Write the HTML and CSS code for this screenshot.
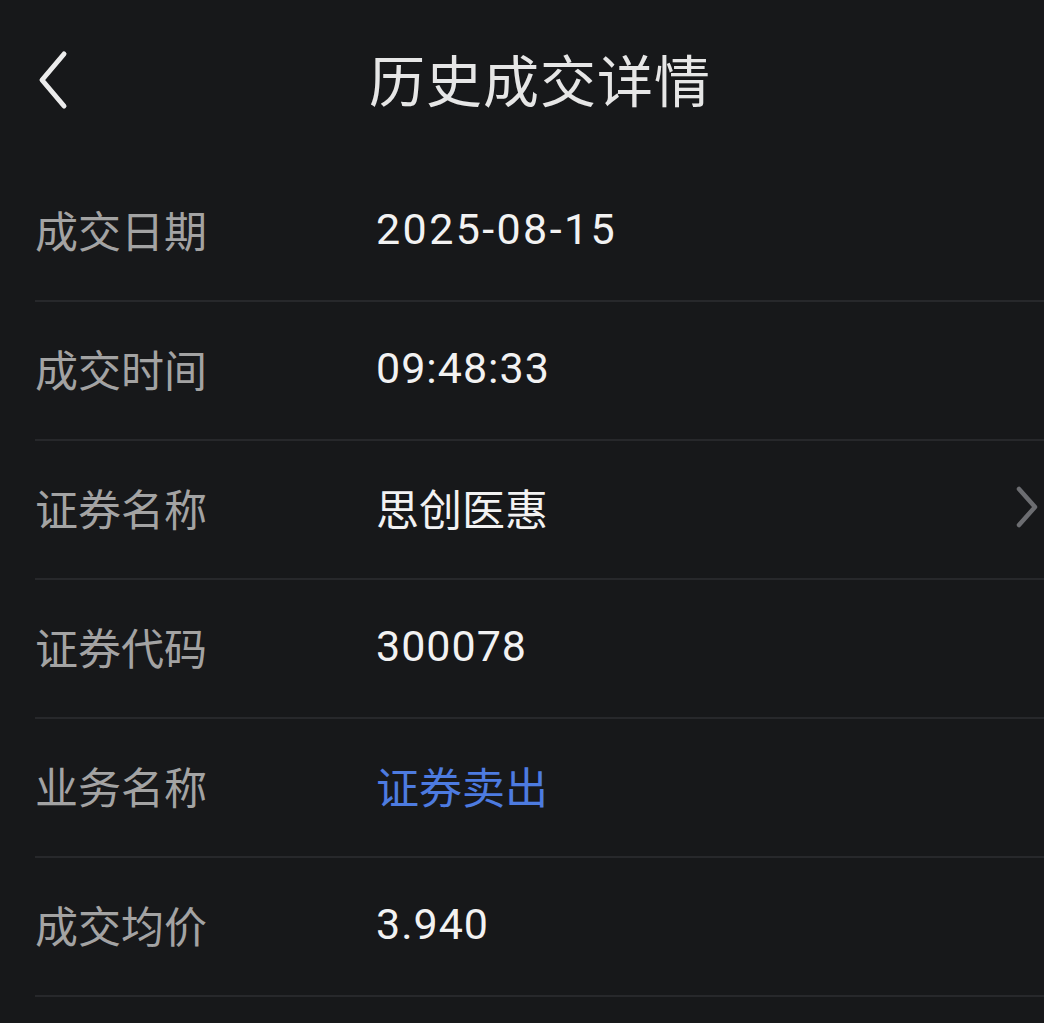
FILE: index.html
```html
<!DOCTYPE html>
<html lang="zh-CN">
<head>
<meta charset="UTF-8">
<meta name="viewport" content="width=device-width, initial-scale=1.0">
<title>历史成交详情</title>
<link rel="stylesheet" href="styles.css">
</head>
<body>
<div class="page">
    <div class="header">
        <a class="back" href="#">
            <svg width="40" height="60" viewBox="0 0 40 60"><path d="M32 4 L10 30 L32 56" fill="none" stroke="#ececec" stroke-width="5" stroke-linecap="round" stroke-linejoin="round"/></svg>
        </a>
        <h1>历史成交详情</h1>
    </div>

    <div class="list">
        <div class="row">
            <span class="label">成交日期</span>
            <span class="value num date">2025-08-15</span>
        </div>
        <div class="row">
            <span class="label">成交时间</span>
            <span class="value num">09:48:33</span>
        </div>
        <div class="row">
            <span class="label">证券名称</span>
            <span class="value">思创医惠</span>
            <svg class="arrow" width="26" height="44" viewBox="0 0 26 44"><path d="M5 4 L21 22 L5 40" fill="none" stroke="#6c6d71" stroke-width="4.5" stroke-linecap="round" stroke-linejoin="round"/></svg>
        </div>
        <div class="row">
            <span class="label">证券代码</span>
            <span class="value num">300078</span>
        </div>
        <div class="row">
            <span class="label">业务名称</span>
            <span class="value blue">证券卖出</span>
        </div>
        <div class="row">
            <span class="label">成交均价</span>
            <span class="value num">3.940</span>
        </div>
    </div>
</div>
</body>
</html>
```

FILE: styles.css
```css
body {
    margin: 0;
    background-color: #17181a;
    font-family: "Noto Sans CJK SC", "Noto Sans", sans-serif;
}
.page {
    width: 1044px;
    height: 1023px;
    overflow: hidden;
}
.header {
    position: relative;
    height: 163px;
    display: flex;
    align-items: center;
    justify-content: center;
    padding-bottom: 8px;
    padding-left: 36px;
    box-sizing: border-box;
}
.back {
    position: absolute;
    left: 32px;
    top: 50px;
    display: block;
}
.header h1 {
    margin: 0;
    font-size: 56px;
    font-weight: 400;
    color: #e6e6e6;
    letter-spacing: 1px;
}
.list {
    margin-left: 35px;
}
.row {
    height: 139px;
    display: flex;
    align-items: center;
    padding-bottom: 5px;
    box-sizing: border-box;
    border-bottom: 2px solid #27282b;
}
.label {
    width: 341px;
    font-size: 43px;
    color: #a3a3a3;
}
.value {
    flex: 1;
    font-size: 43px;
    color: #f2f2f2;
}
.num {
    font-family: Roboto, "Noto Sans CJK SC", sans-serif;
    letter-spacing: 1px;
}
.date {
    letter-spacing: 2.4px;
}
.blue {
    color: #4d7be0;
}
.arrow {
    margin-right: 4px;
}
```
